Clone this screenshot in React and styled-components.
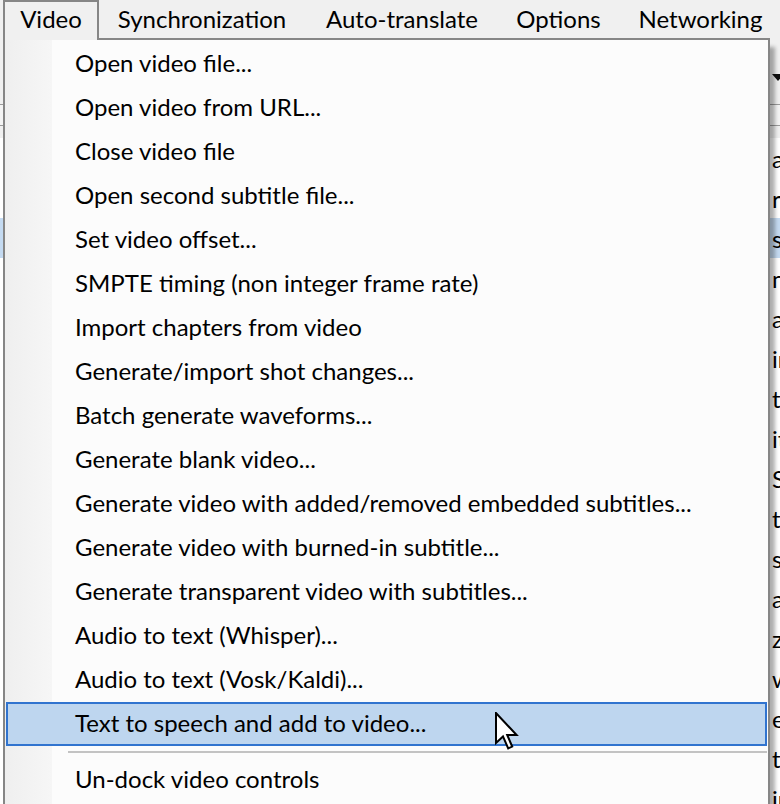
import React from 'react';
import styled, { createGlobalStyle } from 'styled-components';

const GlobalStyle = createGlobalStyle`
  html, body {
    margin: 0;
    padding: 0;
  }
  body {
    width: 780px;
    height: 804px;
    overflow: hidden;
    background: #f0f0f0;
    font-family: Lato, "Noto Sans", sans-serif;
    color: #000;
  }
`;

const Window = styled.div`
  position: relative;
  width: 780px;
  height: 804px;
  overflow: hidden;
  background: #f0f0f0;
`;

const MenuBar = styled.div`
  display: flex;
  height: 38px;
  padding-left: 3px;
  background: #f0f0f0;
`;

const MenuTitle = styled.div`
  position: relative;
  z-index: 3;
  box-sizing: border-box;
  flex: none;
  width: ${p => p.$w}px;
  height: ${p => (p.$open ? 40 : 38)}px;
  display: flex;
  align-items: center;
  justify-content: center;
  padding-bottom: ${p => (p.$open ? 6 : 4)}px;
  font-size: 24px;
  white-space: nowrap;
  background: #f0f0f0;
  border: 2px solid ${p => (p.$open ? '#868686' : 'transparent')};
  border-bottom: none;
`;

/* the app content that sits behind the open menu */
const Workspace = styled.div`
  display: flex;
  flex-direction: column;
`;

const Toolbar = styled.div`
  height: 66px;
  display: flex;
  align-items: flex-start;
  justify-content: flex-end;
  padding-top: 36px;
  box-sizing: border-box;
`;

const ComboArrow = styled.div`
  width: 12px;
  margin-right: -4px;
  height: 0;
  border-left: 6px solid transparent;
  border-right: 6px solid transparent;
  border-top: 7px solid #111;
  box-sizing: border-box;
`;

const ListHeader = styled.div`
  height: 20px;
  border-top: 1px solid #9a9a9a;
  border-bottom: 1px solid #9a9a9a;
  background: #f4f4f4;
  margin-bottom: 12px;
`;

const List = styled.div`
  background: #fff;
  display: flex;
  flex-direction: column;
`;

const ListRow = styled.div`
  height: 40px;
  display: flex;
  align-items: center;
  padding-left: 772px;
  font-size: 24px;
  white-space: nowrap;
  background: ${p => (p.$selected ? '#c4daf1' : '#fff')};
`;

/* the dropdown */
const Dropdown = styled.div`
  position: absolute;
  z-index: 2;
  left: 3px;
  top: 38px;
  width: 767px;
  height: 800px;
  box-sizing: border-box;
  border: 2px solid #868686;
  padding-top: 2px;
  background: linear-gradient(
    to right,
    #efefef 0,
    #f6f6f6 47px,
    #fcfcfc 47px
  );
  box-shadow: 5px 9px 4px rgba(0, 0, 0, 0.32);
`;

const Item = styled.div`
  height: 44px;
  box-sizing: border-box;
  margin: 0 1px 0 1px;
  border: 2px solid ${p => (p.$active ? '#3174cf' : 'transparent')};
  background: ${p => (p.$active ? '#bed6ef' : 'transparent')};
  display: flex;
  align-items: center;
  padding-left: 67px;
  padding-bottom: 4px;
  font-size: 24px;
  white-space: nowrap;
`;

const Separator = styled.div`
  height: 12px;
  display: flex;
  align-items: center;
  padding-left: 63px;
  padding-right: 1px;

  &::after {
    content: '';
    flex: 1;
    height: 2px;
    background: #c3c3c3;
  }
`;

const Cursor = styled.svg`
  position: absolute;
  z-index: 5;
  left: 495px;
  top: 712px;
`;

const titles = [
  { label: 'Video', w: 96, open: true },
  { label: 'Synchronization', w: 206 },
  { label: 'Auto-translate', w: 194 },
  { label: 'Options', w: 119 },
  { label: 'Networking', w: 165 },
];

const items = [
  'Open video file...',
  'Open video from URL...',
  'Close video file',
  'Open second subtitle file...',
  'Set video offset...',
  'SMPTE timing (non integer frame rate)',
  'Import chapters from video',
  'Generate/import shot changes...',
  'Batch generate waveforms...',
  'Generate blank video...',
  'Generate video with added/removed embedded subtitles...',
  'Generate video with burned-in subtitle...',
  'Generate transparent video with subtitles...',
  'Audio to text (Whisper)...',
  'Audio to text (Vosk/Kaldi)...',
  'Text to speech and add to video...',
];

const backRows = [
  'and', 'right', 'so', 'now', 'and', 'in', 'the', 'it', 'So', 'they',
  'see', 'all', 'zero', 'will', 'else', 'the', 'in',
];

const App = () => (
  <Window>
    <GlobalStyle />
    <MenuBar>
      {titles.map(t => (
        <MenuTitle key={t.label} $w={t.w} $open={t.open}>
          {t.label}
        </MenuTitle>
      ))}
    </MenuBar>

    <Workspace>
      <Toolbar>
        <ComboArrow />
      </Toolbar>
      <ListHeader />
      <List>
        {backRows.map((r, i) => (
          <ListRow key={i} $selected={i === 2}>
            {r}
          </ListRow>
        ))}
      </List>
    </Workspace>

    <Dropdown>
      {items.map((label, i) => (
        <Item key={label} $active={i === items.length - 1}>
          {label}
        </Item>
      ))}
      <Separator />
      <Item>Un-dock video controls</Item>
    </Dropdown>

    <Cursor width="24" height="38" viewBox="0 0 12 19">
      <path
        d="M0.5 0.5 L0.5 15.5 L4 12.2 L6.6 18.2 L8.6 17.3 L6.1 11.5 L10.8 11.5 Z"
        fill="#fff"
        stroke="#000"
        strokeWidth="1"
        strokeLinejoin="miter"
      />
    </Cursor>
  </Window>
);

export default App;
